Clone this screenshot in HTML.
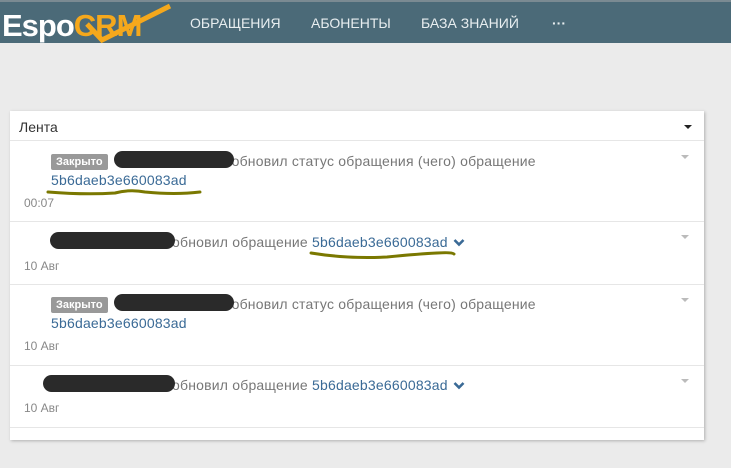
<!DOCTYPE html>
<html><head><meta charset="utf-8"><style>
*{margin:0;padding:0;box-sizing:border-box}
body{width:731px;height:468px;background:#ebebeb;font-family:"Liberation Sans",sans-serif;position:relative;overflow:hidden}
.nav{position:absolute;left:0;top:0;width:731px;height:43px;background:#4b6a78;border-top:2px solid #7a8a92}
.nav span.m{position:absolute;top:13px;color:#e8eef0;font-size:14px}
.logo{position:absolute;left:2px;top:6px;font-size:31px;font-weight:bold;color:#fff;letter-spacing:-1px}
.panel{position:absolute;left:10px;top:111px;width:694px;height:329px;background:#fff;box-shadow:1px 1px 3px rgba(0,0,0,.25)}
.a{position:absolute;font-size:14px;color:#777;white-space:nowrap;letter-spacing:0.2px}
.l{color:#3a6a96}
.d{position:absolute;font-size:12px;color:#888}
.hr{position:absolute;left:0;width:694px;height:1px;background:#e6e6e6}
.badge{display:inline-block;background:#999;color:#fff;font-size:11px;font-weight:bold;padding:2px 5px;border-radius:2px;vertical-align:1px;letter-spacing:0}
.blob{position:absolute;height:17px;background:#2a2a2a;border-radius:9px}
.caret{position:absolute;width:0;height:0;border-left:4px solid transparent;border-right:4px solid transparent;border-top:4px solid #bbb}
svg{position:absolute}
</style></head><body>
<div class="nav">
<div class="logo">Espo<span style="color:#f5a81c">CRM</span></div>
<svg style="left:80px;top:0" width="95" height="42"><path d="M7 22 L22 38 L90 4" stroke="#f5a81c" stroke-width="5" fill="none"/></svg>
<span class="m" style="left:190px">ОБРАЩЕНИЯ</span>
<span class="m" style="left:311px">АБОНЕНТЫ</span>
<span class="m" style="left:421px">БАЗА ЗНАНИЙ</span>
<span class="m" style="left:552px;font-weight:bold">···</span>
</div>
<div class="panel">
<div class="a" style="left:9px;top:8px;color:#333;font-size:14px;letter-spacing:0">Лента</div>
<div style="position:absolute;left:674px;top:14px;border-left:4px solid transparent;border-right:4px solid transparent;border-top:4px solid #222"></div>
<div class="hr" style="top:29px"></div>

<div class="a" style="left:41px;top:42px"><span class="badge">Закрыто</span><span style="display:inline-block;width:124px"></span>обновил статус обращения (чего) обращение</div>
<div class="blob" style="left:104px;top:40px;width:120px"></div>
<div class="a l" style="left:41px;top:61px">5b6daeb3e660083ad</div>
<svg style="left:35px;top:75px" width="160" height="12"><path d="M3 6 Q40 9 70 7 Q85 3 100 6 Q130 9 155 6" stroke="#7a7800" stroke-width="3" fill="none" stroke-linecap="round"/></svg>
<div class="d" style="left:14px;top:85px">00:07</div>
<div class="caret" style="left:671px;top:44px"></div>
<div class="hr" style="top:110px"></div>

<div class="a" style="left:162px;top:123px">обновил обращение <span class="l">5b6daeb3e660083ad</span></div>
<svg style="left:443px;top:127px" width="12" height="9"><path d="M1.5 2 L6 6.5 L10.5 2" stroke="#3a6a96" stroke-width="2.6" fill="none"/></svg>
<div class="blob" style="left:40px;top:121px;width:125px"></div>
<svg style="left:297px;top:138px" width="155" height="14"><path d="M4 4 Q40 10 80 8 Q110 5 130 4 Q145 3 147 5" stroke="#7a7800" stroke-width="3" fill="none" stroke-linecap="round"/></svg>
<div class="d" style="left:14px;top:148px">10 Авг</div>
<div class="caret" style="left:671px;top:124px"></div>
<div class="hr" style="top:173px"></div>

<div class="a" style="left:41px;top:185px"><span class="badge">Закрыто</span><span style="display:inline-block;width:124px"></span>обновил статус обращения (чего) обращение</div>
<div class="blob" style="left:104px;top:183px;width:120px"></div>
<div class="a l" style="left:41px;top:204px">5b6daeb3e660083ad</div>
<div class="d" style="left:14px;top:228px">10 Авг</div>
<div class="caret" style="left:671px;top:187px"></div>
<div class="hr" style="top:254px"></div>

<div class="a" style="left:162px;top:266px">обновил обращение <span class="l">5b6daeb3e660083ad</span></div>
<svg style="left:443px;top:270px" width="12" height="9"><path d="M1.5 2 L6 6.5 L10.5 2" stroke="#3a6a96" stroke-width="2.6" fill="none"/></svg>
<div class="blob" style="left:33px;top:264px;width:132px"></div>
<div class="d" style="left:14px;top:290px">10 Авг</div>
<div class="caret" style="left:671px;top:268px"></div>
<div class="hr" style="top:316px"></div>
</div>
</body></html>
